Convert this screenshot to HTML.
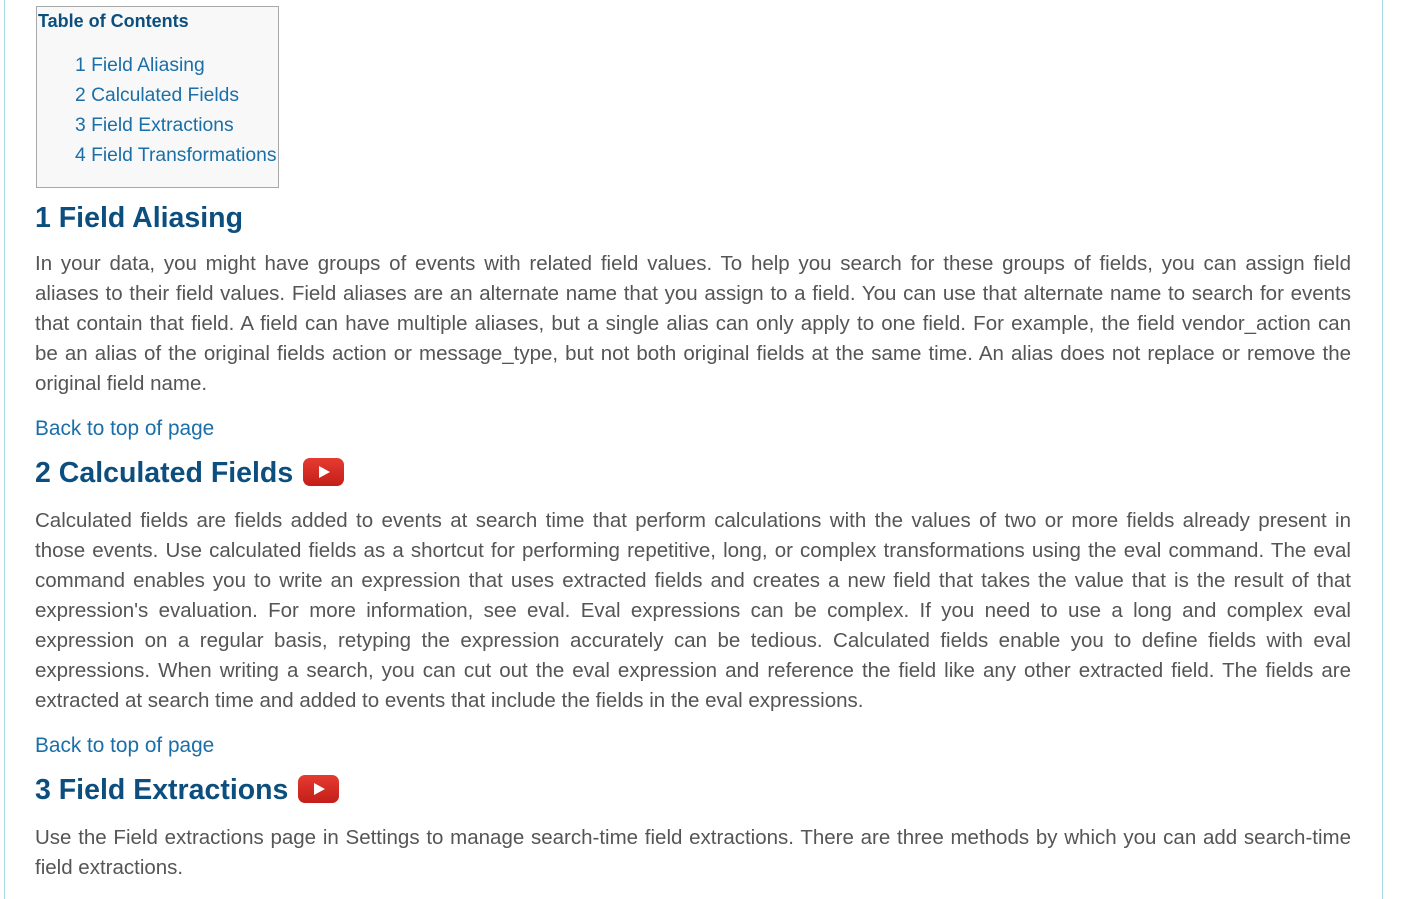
<!DOCTYPE html>
<html><head><meta charset="utf-8"><style>
body{margin:0;width:1417px;height:893px;overflow:hidden;background:#fff;font-family:"Liberation Sans",sans-serif;position:relative}
.frame{position:absolute;left:4px;top:-1px;width:1377px;height:900px;border-left:1px solid #a9dbe6;border-right:1px solid #a9dbe6}
.toc{position:absolute;left:36px;top:6px;width:241px;height:180px;background:#f8f8f8;border:1px solid #a8a8a8}
.toc .t{position:absolute;left:1px;top:4px;font-weight:bold;font-size:18px;color:#0c4f7f}
.toc a{position:absolute;left:38px;font-size:19.3px;color:#1a6fa8;text-decoration:none;white-space:nowrap}
h2{position:absolute;left:35px;margin:0;font-size:28.5px;font-weight:bold;color:#0c4f7f;white-space:nowrap}
.p{position:absolute;left:35px;width:1316px;font-size:20.5px;color:#555;}
.p div{height:30px;line-height:30px;text-align:justify;text-align-last:justify;white-space:nowrap}
.p div.l{text-align-last:left}
.back{position:absolute;left:35px;font-size:20.8px;color:#1a6fa8}
.yt{display:inline-block;vertical-align:middle;width:41px;height:28px;background:linear-gradient(#e53b30,#c41e1a);border-radius:7px;position:relative;margin-left:10px;top:-2px}
.yt:after{content:"";position:absolute;left:16px;top:8px;border-left:11px solid #fff;border-top:6px solid transparent;border-bottom:6px solid transparent}
</style></head><body>
<div class="frame"></div>
<div class="toc"><div class="t">Table of Contents</div>
<a style="top:48px">1 Field Aliasing</a>
<a style="top:78px">2 Calculated Fields</a>
<a style="top:108px">3 Field Extractions</a>
<a style="top:138px">4 Field Transformations</a></div>
<h2 style="top:202px">1 Field Aliasing</h2>
<div class="p" style="top:249px">
<div>In your data, you might have groups of events with related field values. To help you search for these groups of fields, you can assign field</div>
<div>aliases to their field values. Field aliases are an alternate name that you assign to a field. You can use that alternate name to search for events</div>
<div>that contain that field. A field can have multiple aliases, but a single alias can only apply to one field. For example, the field vendor_action can</div>
<div>be an alias of the original fields action or message_type, but not both original fields at the same time. An alias does not replace or remove the</div>
<div class="l">original field name.</div></div>
<div class="back" style="top:417px">Back to top of page</div>
<h2 style="top:457px">2 Calculated Fields<span class="yt"></span></h2>
<div class="p" style="top:506px">
<div>Calculated fields are fields added to events at search time that perform calculations with the values of two or more fields already present in</div>
<div>those events. Use calculated fields as a shortcut for performing repetitive, long, or complex transformations using the eval command. The eval</div>
<div>command enables you to write an expression that uses extracted fields and creates a new field that takes the value that is the result of that</div>
<div>expression's evaluation. For more information, see eval. Eval expressions can be complex. If you need to use a long and complex eval</div>
<div>expression on a regular basis, retyping the expression accurately can be tedious. Calculated fields enable you to define fields with eval</div>
<div>expressions. When writing a search, you can cut out the eval expression and reference the field like any other extracted field. The fields are</div>
<div class="l">extracted at search time and added to events that include the fields in the eval expressions.</div></div>
<div class="back" style="top:734px">Back to top of page</div>
<h2 style="top:774px">3 Field Extractions<span class="yt"></span></h2>
<div class="p" style="top:823px">
<div>Use the Field extractions page in Settings to manage search-time field extractions. There are three methods by which you can add search-time</div>
<div class="l">field extractions.</div></div>
</body></html>
